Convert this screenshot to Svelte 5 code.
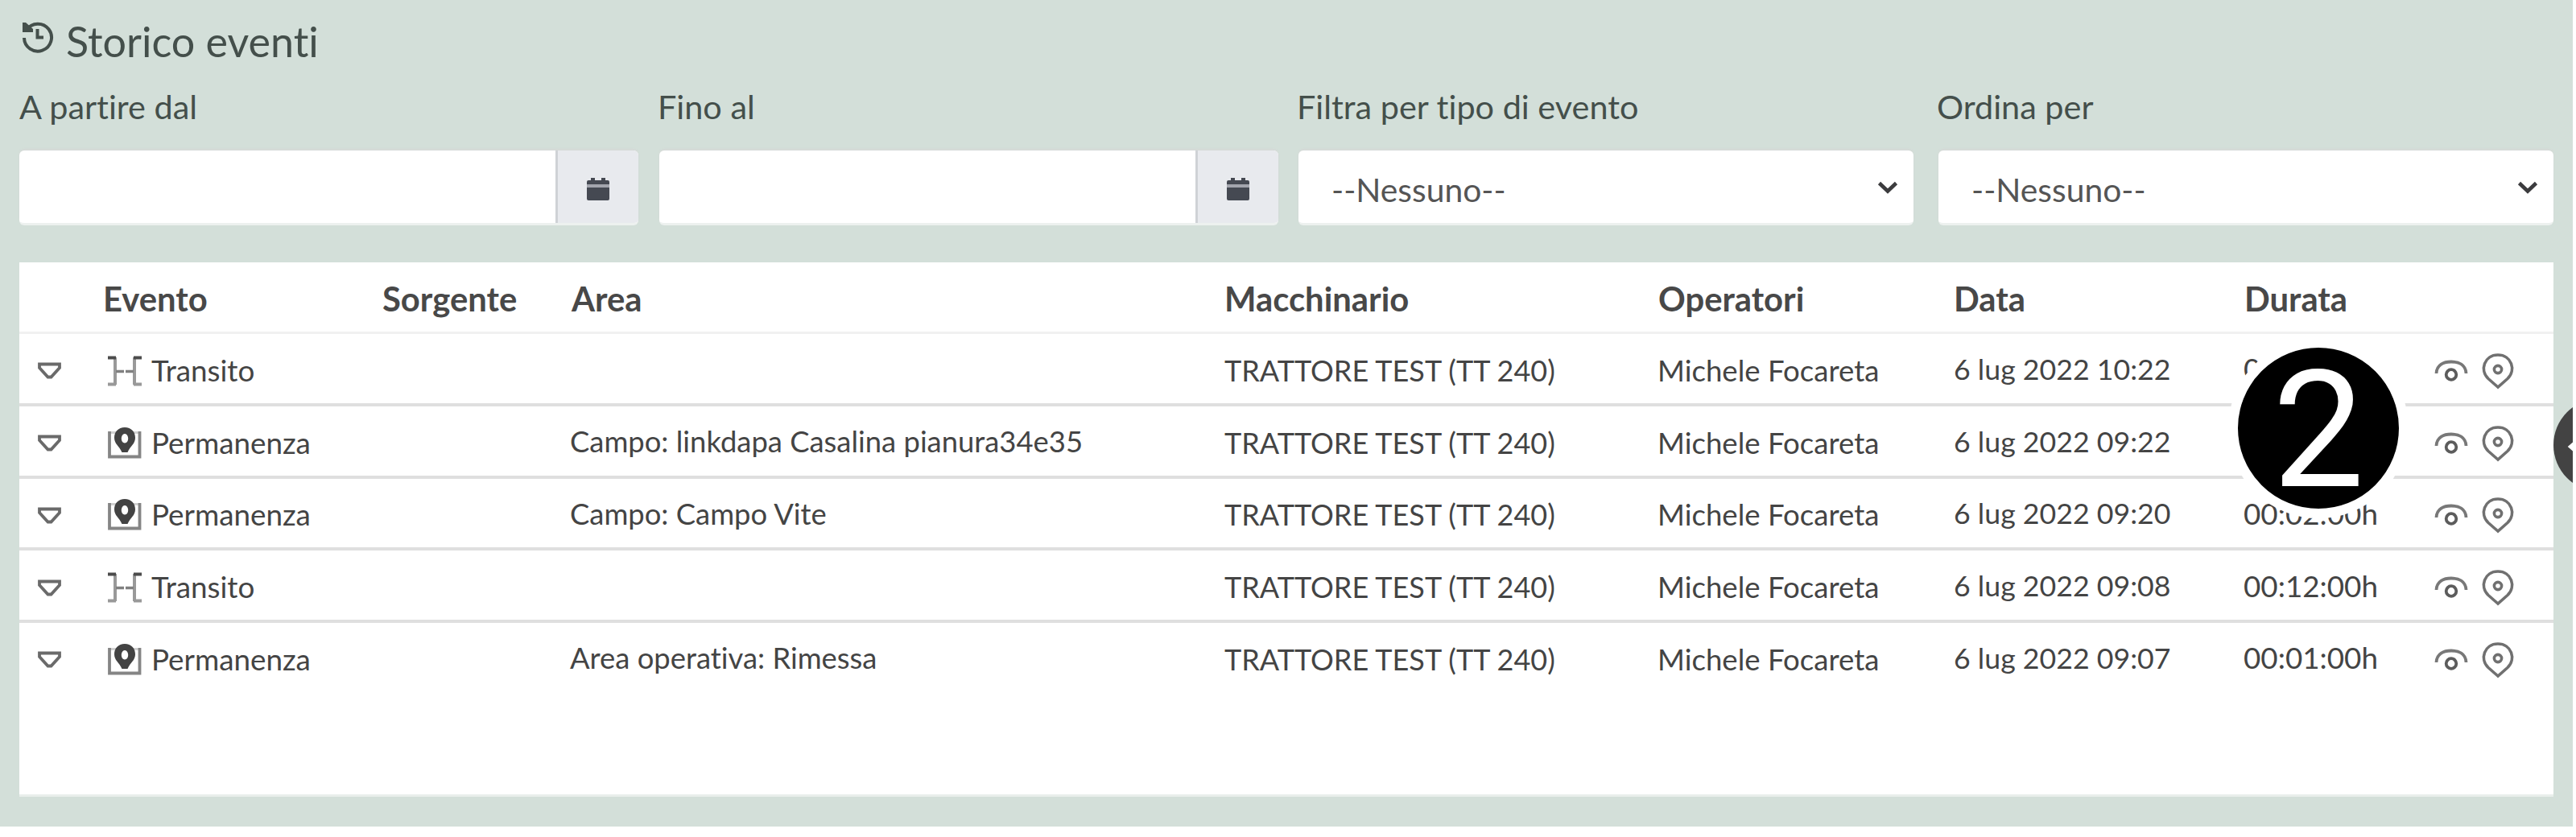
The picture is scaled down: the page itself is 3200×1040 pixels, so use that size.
<script>
  const columns = [
    { key: 'toggle', label: '' },
    { key: 'event', label: 'Evento' },
    { key: 'source', label: 'Sorgente' },
    { key: 'area', label: 'Area' },
    { key: 'machine', label: 'Macchinario' },
    { key: 'operator', label: 'Operatori' },
    { key: 'date', label: 'Data' },
    { key: 'duration', label: 'Durata' },
    { key: 'actions', label: '' }
  ];

  const machine = 'TRATTORE TEST (TT 240)';
  const operator = 'Michele Focareta';
  const rows = [
    { event: 'Transito', area: '', date: '6 lug 2022 10:22', duration: '0' },
    { event: 'Permanenza', area: 'Campo: linkdapa Casalina pianura34e35', date: '6 lug 2022 09:22', duration: '' },
    { event: 'Permanenza', area: 'Campo: Campo Vite', date: '6 lug 2022 09:20', duration: '00:02:00h' },
    { event: 'Transito', area: '', date: '6 lug 2022 09:08', duration: '00:12:00h' },
    { event: 'Permanenza', area: 'Area operativa: Rimessa', date: '6 lug 2022 09:07', duration: '00:01:00h' }
  ];

  const filters = [
    { label: 'A partire dal', type: 'picker' },
    { label: 'Fino al', type: 'picker' },
    { label: 'Filtra per tipo di evento', type: 'select' },
    { label: 'Ordina per', type: 'select' }
  ];
</script>

<main class="screen">
  <section class="panel">
    <h1 class="title">
      <svg class="history" width="40" height="40" viewBox="0 0 40 40">
        <path d="M6 11 A17 17 0 1 1 3 21" fill="none" stroke="currentColor" stroke-width="4" />
        <path d="M1 2 H5 L14 10 V14 H1 Z" fill="currentColor" />
        <path d="M19.5 10 V20.5 H27" fill="none" stroke="currentColor" stroke-width="4" />
      </svg>
      <span>Storico eventi</span>
    </h1>

    <div class="filters">
      {#each filters as filter}
        <div class="filter {filter.type}">
          <span class="label">{filter.label}</span>
          {#if filter.type === 'picker'}
            <div class="control">
              <div class="input"></div>
              <div class="addon">
                <svg width="30" height="30" viewBox="0 0 30 30">
                  <path d="M1 10 V6 Q1 4 3 4 H6 V1 H11 V4 H19 V1 H24 V4 H27 Q29 4 29 6 V10 Z" fill="#454952" />
                  <path d="M1 9 H29 V13 H1 Z" fill="#a3a5ad" />
                  <path d="M1 13 H29 V27 Q29 29 27 29 H3 Q1 29 1 27 Z" fill="#454952" />
                </svg>
              </div>
            </div>
          {:else}
            <div class="control choice">
              <span>--Nessuno--</span>
              <svg width="26" height="18" viewBox="0 0 26 18">
                <path d="M2.5 3.5 L13 13.5 L23.5 3.5" fill="none" stroke="#3c3c3e" stroke-width="4.6" />
              </svg>
            </div>
          {/if}
        </div>
      {/each}
    </div>

    <div class="table">
      <div class="row head">
        {#each columns as column}
          <div>{column.label}</div>
        {/each}
      </div>
      {#each rows as row}
        <div class="row">
          <div class="toggle">
            <svg width="32" height="22" viewBox="0 0 32 22">
              <path d="M3 2.500 H28 V7 L17.500 18.500 H13.500 L3 7 Z" fill="none" stroke="#6a6a6a" stroke-width="3.8" />
            </svg>
          </div>
          <div class="event">
            {#if row.event === 'Transito'}
              <svg width="42" height="40" viewBox="0 0 42 40">
                <path d="M9 3 V37 M33 3 V37 M0 36.5 H10 M32 36.5 H42" fill="none" stroke="#999" stroke-width="4" />
                <path d="M10 20.500 H32" stroke="#808080" stroke-width="3.600" stroke-dasharray="10 2" />
                <path d="M0 3.5 H10 M32 3.5 H42" stroke="#4c4c4c" stroke-width="3.8" />
              </svg>
            {:else}
              <svg width="42" height="40" viewBox="0 0 42 40">
                <path d="M2 6.500 H40" stroke="#d2d2d2" stroke-width="3" />
                <path d="M2 5 V36.500 H39.500 V5" fill="none" stroke="#858585" stroke-width="3.8" />
                <path d="M21 0 C13 0 8 5.500 8 13 C8 20.500 14 23 17.500 31 H24.500 C28 23 34 20.500 34 13 C34 5.500 29 0 21 0 Z M21 8 A4.200 5.800 0 1 1 20.990 8 Z" fill="#434343" fill-rule="evenodd" />
              </svg>
            {/if}
            <span>{row.event}</span>
          </div>
          <div></div>
          <div class="area">{row.area}</div>
          <div class="machine">{machine}</div>
          <div class="operator">{operator}</div>
          <div class="date">{row.date}</div>
          <div class="duration">{row.duration}</div>
          <div class="actions">
            <svg width="42" height="46" viewBox="0 0 42 46">
              <path d="M2.500 26 C3 15 12 11.500 21 11.500 S39 15 39.500 26" fill="none" stroke="#787878" stroke-width="3.8" />
              <circle cx="21" cy="27.500" r="6.300" fill="none" stroke="#5c5c5c" stroke-width="3.800" />
            </svg>
            <svg width="42" height="46" viewBox="0 0 42 46">
              <path d="M21 43 L9 32.500 C-2 22 4 3 21 3 S44 22 33 32.500 Z" fill="none" stroke="#707070" stroke-width="3.600" />
              <circle cx="21" cy="21" r="4.600" fill="none" stroke="#707070" stroke-width="3.600" />
            </svg>
          </div>
        </div>
      {/each}
    </div>

    <div class="drawer-handle">
      <svg width="116" height="116" viewBox="0 0 116 116">
        <circle cx="58" cy="58" r="58" fill="#434343" />
        <path d="M36 46 L20 60 L36 74 Z" fill="#fff" stroke="#fff" stroke-width="3" />
      </svg>
    </div>
  </section>

  <div class="step-badge">2</div>
</main>

<style>
  :global(body) {
    margin: 0;
    background: #fff;
  }

  .screen {
    position: relative;
    width: 3200px;
    height: 1040px;
    overflow: hidden;
    background: #fff;
    font-family: Lato, 'Open Sans', sans-serif;
    font-variant-ligatures: none;
    color: #444;
  }

  .panel {
    position: relative;
    box-sizing: border-box;
    width: 3196px;
    height: 1027px;
    padding: 0 24px;
    overflow: hidden;
    background: #d3dfd9;
  }

  .title {
    display: flex;
    align-items: center;
    height: 98px;
    margin: 0;
    padding-left: 3px;
    font-size: 52px;
    font-weight: 400;
    color: #444f4b;
  }

  .title span {
    padding-top: 3px;
  }

  .history {
    margin: 0 15px 6px 0;
  }

  .filters {
    display: grid;
    grid-template-columns: 795px 794px 795px 764px;
    height: 228px;
  }

  .filter.select {
    width: 764px;
  }

  .filter.picker {
    width: 769px;
  }

  .label {
    box-sizing: border-box;
    display: flex;
    align-items: center;
    height: 64px;
    margin-bottom: 25px;
    padding-top: 3px;
    font-size: 41.4px;
    color: #444f4b;
  }

  .filter + .filter .label {
    margin-left: -2px;
  }

  .control {
    box-sizing: border-box;
    display: flex;
    height: 93px;
    border-bottom: 3px solid #edf1ef;
    border-radius: 6px;
    overflow: hidden;
    background: #fff;
    box-shadow: 0 -2px 2px rgba(214, 216, 215, 0.8);
  }

  .input {
    flex: 1;
  }

  .addon {
    box-sizing: border-box;
    display: flex;
    align-items: center;
    justify-content: center;
    width: 103px;
    padding-top: 5px;
    border-left: 3px solid #cfd2d6;
    background: #e8eaee;
  }

  .choice {
    align-items: center;
    justify-content: space-between;
    padding: 7px 19px 0 41px;
    font-size: 40.8px;
    color: #555;
  }

  .choice svg {
    margin-bottom: 6px;
  }

  .table {
    box-sizing: border-box;
    width: 3148px;
    height: 664px;
    border-bottom: 3px solid #e9eeeb;
    background: #fff;
  }

  .row {
    box-sizing: border-box;
    display: grid;
    grid-template-columns: 102px 347px 235px 811px 539px 367px 361px 238px 148px;
    align-items: center;
    height: 89.75px;
    border-bottom: 4px solid #dfdfdf;
    font-size: 36.5px;
    white-space: nowrap;
    color: #444;
  }

  .row:last-child {
    border-bottom-color: transparent;
  }

  .head {
    height: 89px;
    padding-top: 3px;
    border-bottom: 3px solid #f1f1f1;
    font-size: 41.8px;
    font-weight: 700;
    color: #484848;
  }

  .head div {
    padding-left: 2px;
  }

  .toggle {
    display: flex;
    padding: 7px 0 0 22px;
  }

  .event {
    display: flex;
    align-items: center;
    gap: 12px;
    padding-left: 8px;
    font-size: 36.8px;
  }

  .event svg {
    margin-top: 6px;
  }

  .event span {
    padding-top: 4px;
  }

  .area {
    padding-top: 1px;
    font-size: 36.4px;
  }

  .machine {
    padding: 4px 0 0 2px;
    font-size: 36px;
  }

  .operator {
    padding: 4px 0 0 1px;
    font-size: 36.6px;
  }

  .date {
    padding: 1px 0 0 2px;
    font-size: 35.7px;
  }

  .duration {
    padding: 1px 0 0 1px;
    font-size: 36.8px;
  }

  .actions {
    display: flex;
    gap: 16px;
    padding-top: 6px;
  }

  .drawer-handle {
    position: absolute;
    top: 495px;
    left: 3172px;
    width: 116px;
    height: 116px;
  }

  .step-badge {
    position: absolute;
    top: 420px;
    left: 2768px;
    display: flex;
    box-sizing: border-box;
    align-items: center;
    justify-content: center;
    width: 224px;
    height: 224px;
    padding-top: 6px;
    border: 12px solid #fff;
    border-radius: 50%;
    background: #000;
    font-family: Roboto, 'Liberation Sans', sans-serif;
    font-size: 203px;
    line-height: 200px;
    color: #fff;
  }
</style>
